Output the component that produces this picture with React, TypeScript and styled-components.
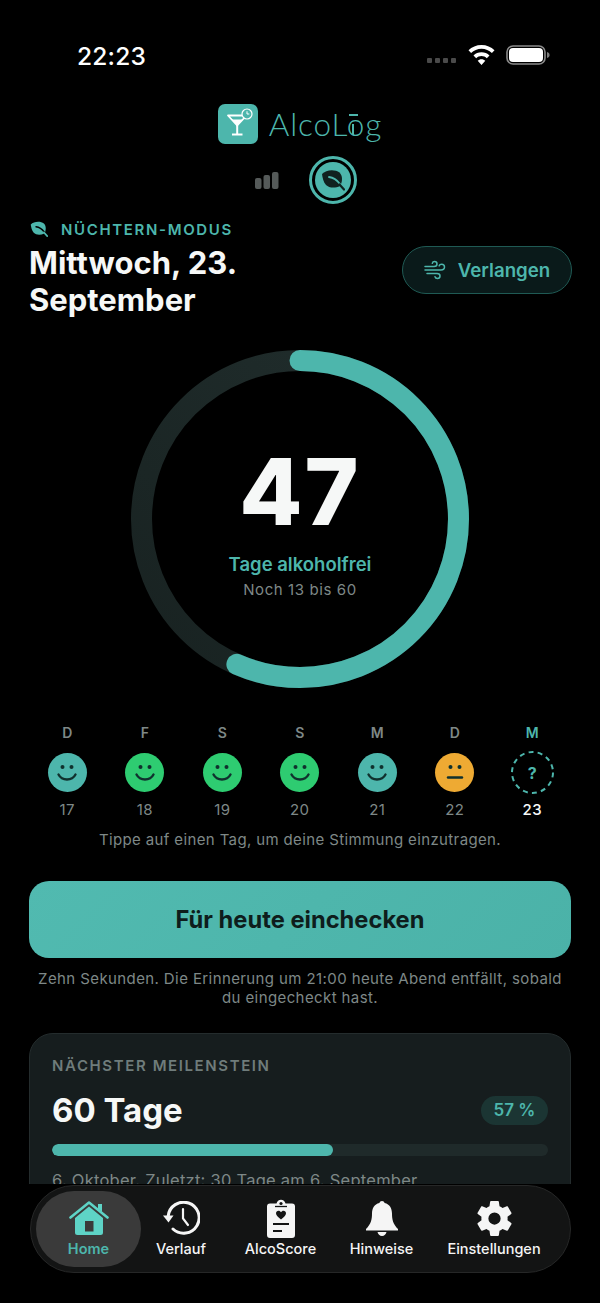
import styled, { createGlobalStyle } from "styled-components";

/* ---------------------------------------------
   Data
--------------------------------------------- */
type Mood = "calm" | "good" | "meh" | "open";

const DAYS: { letter: string; num: number; mood: Mood }[] = [
  { letter: "D", num: 17, mood: "calm" },
  { letter: "F", num: 18, mood: "good" },
  { letter: "S", num: 19, mood: "good" },
  { letter: "S", num: 20, mood: "good" },
  { letter: "M", num: 21, mood: "calm" },
  { letter: "D", num: 22, mood: "meh" },
  { letter: "M", num: 23, mood: "open" },
];

const MOOD_BG: Record<Mood, string> = {
  calm: "#4db6ac",
  good: "#2ecc71",
  meh: "#eeaa33",
  open: "transparent",
};

const TEAL = "#4db6ac";

/* ---------------------------------------------
   Styled Components
--------------------------------------------- */
const Global = createGlobalStyle`
  html, body {
    margin: 0;
    padding: 0;
    background: #000;
  }
  * {
    box-sizing: border-box;
  }
`;

const Screen = styled.div`
  width: 600px;
  height: 1303px;
  background: #000;
  color: #fff;
  font-family: Inter, "Liberation Sans", sans-serif;
  display: flex;
  flex-direction: column;
  overflow: hidden;
`;

const Main = styled.main`
  height: 1184px;
  flex: none;
  overflow: hidden;
`;

const StatusBar = styled.div`
  height: 104px;
  padding: 41px 50px 0 77px;
  display: flex;
  justify-content: space-between;
  align-items: flex-start;
`;

const Clock = styled.div`
  font-size: 24.5px;
  line-height: 30px;
  font-weight: 500;
  letter-spacing: 0.2px;
`;

const StatusIcons = styled.div`
  display: flex;
  align-items: center;
  height: 28px;
`;

const SignalDots = styled.div`
  display: flex;
  gap: 3px;
  margin: 11px 12px 0 0;
`;

const SignalDot = styled.span`
  width: 5px;
  height: 5px;
  border-radius: 1px;
  background: #4a4a4a;
`;

const BrandRow = styled.div`
  height: 40px;
  display: flex;
  justify-content: center;
  align-items: center;
  gap: 11px;
`;

const BrandName = styled.div`
  font-family: Lato, sans-serif;
  font-size: 31.5px;
  line-height: 40px;
  font-weight: 300;
  letter-spacing: 0.9px;
  color: ${TEAL};
  position: relative;

  &::before {
    content: "";
    position: absolute;
    left: 80px;
    top: 10px;
    width: 9px;
    height: 2px;
    background: ${TEAL};
  }

  &::after {
    content: "";
    position: absolute;
    left: 83.500px;
    top: 20px;
    width: 2px;
    height: 11px;
    background: ${TEAL};
  }
`;

const ModeRow = styled.div`
  height: 48px;
  margin-top: 12px;
  padding-left: 255px;
  display: flex;
  align-items: center;
  gap: 30px;
`;

const ModeRing = styled.div`
  width: 48px;
  height: 48px;
  border-radius: 50%;
  border: 3px solid ${TEAL};
  padding: 3px;
`;

const ModeDisc = styled.div`
  width: 100%;
  height: 100%;
  border-radius: 50%;
  background: ${TEAL};
  display: flex;
  align-items: center;
  justify-content: center;
`;

const Header = styled.header`
  padding: 15px 28px 0 30px;
  display: flex;
  justify-content: space-between;
  align-items: flex-start;
`;

const Eyebrow = styled.div`
  display: flex;
  align-items: center;
  gap: 13px;
  height: 20px;
  font-size: 15px;
  font-weight: 600;
  letter-spacing: 1.650px;
  color: ${TEAL};
`;

const Title = styled.h1`
  margin: 5px 0 0 -1px;
  width: 260px;
  font-size: 31px;
  line-height: 37px;
  font-weight: 700;
  color: #f6f8f7;
`;

const CravingButton = styled.button`
  margin-top: 27px;
  width: 170px;
  height: 48px;
  border-radius: 24px;
  border: 1px solid #1f5a54;
  background: #0a1a1a;
  color: ${TEAL};
  font-family: inherit;
  font-size: 18.700px;
  font-weight: 600;
  display: flex;
  align-items: center;
  justify-content: center;
  gap: 12px;
`;

const RingWrap = styled.div`
  position: relative;
  width: 338px;
  height: 338px;
  margin: 32px auto 0;
`;

const RingCenter = styled.div`
  position: absolute;
  inset: 0;
  display: flex;
  flex-direction: column;
  align-items: center;
  padding-top: 84px;
`;

const BigNumber = styled.div`
  font-size: 92px;
  line-height: 116px;
  font-weight: 800;
  letter-spacing: 2px;
  color: #f6f8f7;
`;

const RingLabel = styled.div`
  margin-top: 2px;
  font-size: 18.500px;
  line-height: 24px;
  font-weight: 600;
  color: ${TEAL};
`;

const RingSub = styled.div`
  margin-top: 4px;
  font-size: 15px;
  line-height: 20px;
  letter-spacing: 0.6px;
  color: #7e8887;
`;

const Week = styled.div`
  margin-top: 36px;
  padding: 0 29px 0 28.500px;
  display: grid;
  grid-template-columns: repeat(7, 1fr);
`;

const DayCol = styled.div`
  display: flex;
  flex-direction: column;
  align-items: center;
`;

const DayLetter = styled.div<{ $today?: boolean }>`
  font-size: 14px;
  line-height: 18px;
  font-weight: 600;
  color: ${(p) => (p.$today ? TEAL : "#7e8887")};
`;

const MoodDot = styled.div<{ $mood: Mood }>`
  position: relative;
  width: ${(p) => (p.$mood === "open" ? "43px" : "39px")};
  height: ${(p) => (p.$mood === "open" ? "43px" : "39px")};
  margin: ${(p) => (p.$mood === "open" ? "9px 0 6px" : "11px 0 8px")};
  border-radius: 50%;
  background: ${(p) => MOOD_BG[p.$mood]};
  display: flex;
  align-items: center;
  justify-content: center;
  font-size: 16px;
  font-weight: 700;
  color: ${TEAL};
`;

const DayNum = styled.div<{ $today?: boolean }>`
  font-size: 15px;
  line-height: 20px;
  letter-spacing: 0.4px;
  font-weight: ${(p) => (p.$today ? 500 : 400)};
  color: ${(p) => (p.$today ? "#f6f8f7" : "#7e8887")};
`;

const Hint = styled.p`
  margin: 10px 0 0;
  text-align: center;
  font-size: 15px;
  line-height: 20px;
  letter-spacing: 0.370px;
  color: #7e8887;
`;

const CheckIn = styled.button`
  display: block;
  width: 542px;
  height: 77px;
  margin: 31px 0 0 29px;
  border: none;
  border-radius: 20px;
  background: linear-gradient(135deg, #51bab0, #4bb2a8);
  color: #0e1d1c;
  font-family: inherit;
  font-size: 23.700px;
  font-weight: 700;
`;

const Caption = styled.p`
  margin: 11px 30px 0;
  text-align: center;
  font-size: 15px;
  line-height: 19px;
  letter-spacing: 0.4px;
  color: #7e8887;
`;

const Card = styled.section`
  width: 542px;
  height: 220px;
  margin: 26px 0 0 29px;
  padding: 22px 22px 0 22px;
  border-radius: 24px;
  border: 1px solid #242c2d;
  background: #161d1e;
`;

const CardLabel = styled.div`
  font-size: 15px;
  line-height: 20px;
  font-weight: 600;
  letter-spacing: 1.600px;
  color: #6f7c7b;
`;

const CardRow = styled.div`
  margin-top: 14px;
  height: 40px;
  display: flex;
  justify-content: space-between;
  align-items: center;
`;

const CardTitle = styled.div`
  font-size: 33px;
  line-height: 40px;
  font-weight: 700;
  color: #f6f8f7;
`;

const Pill = styled.div`
  width: 67px;
  height: 29px;
  border-radius: 15px;
  background: #1b3533;
  color: ${TEAL};
  font-size: 17px;
  font-weight: 600;
  display: flex;
  align-items: center;
  justify-content: center;
`;

const Track = styled.div`
  margin-top: 14px;
  height: 12px;
  border-radius: 6px;
  background: #1f2a2a;
  overflow: hidden;
`;

const TrackFill = styled.div`
  height: 100%;
  border-radius: 6px;
  background: ${TEAL};
`;

const CardNote = styled.div`
  margin-top: 14px;
  font-size: 16.500px;
  line-height: 20px;
  letter-spacing: 0.25px;
  color: #7e8887;
`;

const TabBar = styled.nav`
  width: 541px;
  height: 88px;
  margin: 1px 0 0 30px;
  padding: 5px 5px;
  border-radius: 44px;
  border: 1px solid #262727;
  background: #131414;
  display: flex;
  align-items: stretch;
`;

const Tab = styled.div<{ $active?: boolean; $w: number }>`
  flex: none;
  width: ${(p) => p.$w}px;
  border-radius: 38px;
  background: ${(p) => (p.$active ? "#3a3a3a" : "transparent")};
  display: flex;
  flex-direction: column;
  align-items: center;
  justify-content: flex-end;
  padding-bottom: 9px;
`;

const TabIcon = styled.div`
  height: 38px;
  display: flex;
  align-items: center;
  justify-content: center;
`;

const TabLabel = styled.div<{ $active?: boolean }>`
  margin-top: 3px;
  font-size: 14.500px;
  line-height: 18px;
  font-weight: ${(p) => (p.$active ? 600 : 500)};
  color: ${(p) => (p.$active ? TEAL : "#f5f5f5")};
`;

/* ---------------------------------------------
   Drawings
--------------------------------------------- */
const Leaf = ({ size, color, vein }: { size: number; color: string; vein: string }) => (
  <svg width={size} height={size} viewBox="0 0 24 24" fill="none">
    <path
      d="M1 6C5 1.500 14 1 18.500 4.500 22 8 21.500 14 19 18 14 20.500 8 20 5 17 2.500 14.500 1.500 10 1 6Z"
      fill={color}
    />
    <path d="M8 9c4 .5 8 3 11 7" stroke={vein} strokeWidth="1.800" strokeLinecap="round" />
    <path d="M18.500 16.500 23 21.500" stroke={color} strokeWidth="2.200" strokeLinecap="round" />
  </svg>
);

const Wifi = () => (
  <svg width="27" height="21" viewBox="0 0 27 21" fill="#fff">
    <path d="M13.500 0C8.400 0 3.800 2 .5 5.300l2.600 2.800C5.800 5.400 9.500 3.800 13.500 3.800s7.700 1.600 10.400 4.300l2.600-2.800C23.200 2 18.600 0 13.500 0Z" />
    <path d="M13.500 7.200c-3.100 0-5.900 1.200-8 3.200l2.700 2.800c1.400-1.300 3.300-2.200 5.300-2.200s3.900.9 5.300 2.200l2.700-2.800c-2.100-2-4.900-3.200-8-3.200Z" />
    <path d="M13.500 14.300c-1.500 0-2.800.6-3.800 1.500l3.800 4.200 3.800-4.200c-1-.9-2.300-1.500-3.800-1.500Z" />
  </svg>
);

const Battery = () => (
  <svg width="44" height="20" viewBox="0 0 44 20" fill="none" style={{ marginLeft: 11 }}>
    <rect x="1" y="1" width="38" height="18" rx="6" stroke="#8a8a8a" strokeWidth="1.600" />
    <rect x="3" y="3" width="34" height="14" rx="4" fill="#fff" />
    <path d="M41 7c1.600.4 2.600 1.500 2.600 3s-1 2.600-2.600 3V7Z" fill="#7a7a7a" />
  </svg>
);

const LogoMark = () => (
  <svg width="40" height="40" viewBox="0 0 40 40">
    <rect width="40" height="40" rx="7" fill="#4db6ac" />
    <path d="M10 11.500h18.500L19.200 21.500Z" fill="none" stroke="#fff" strokeWidth="1.800" strokeLinejoin="round" />
    <path d="M13.500 15.500h11.500L19.200 21.500Z" fill="#fff" />
    <path d="M18.200 21h2v9h-2Z" fill="#fff" />
    <path d="M14 29.500h10.500v2H14Z" fill="#fff" />
    <circle cx="29" cy="10" r="5" fill="#4db6ac" stroke="#fff" strokeWidth="1.200" />
    <path d="M29 7.300V10h2.300" stroke="#fff" strokeWidth="1" fill="none" />
  </svg>
);

const Bars = () => (
  <svg width="24" height="17" viewBox="0 0 24 17" fill="#555a59">
    <rect x="0" y="6" width="6.500" height="11" rx="2" />
    <rect x="8.500" y="3" width="6.500" height="14" rx="2" />
    <rect x="17" y="0" width="6.500" height="17" rx="2" />
  </svg>
);

const Wind = () => (
  <svg width="22" height="20" viewBox="0 0 22 20" fill="none" stroke={TEAL} strokeWidth="1.500" strokeLinecap="round">
    <path d="M1 6.500h9c2 0 3-1.100 3-2.500S12 1.500 10.600 1.500 8.500 2.300 8.300 3.300" />
    <path d="M1 10h16c2 0 3.500-1.200 3.500-2.900S19.200 4.200 17.600 4.200c-1.300 0-2.200.7-2.500 1.700" />
    <path d="M3 13.500h10c1.900 0 3 1 3 2.400s-1.100 2.500-2.600 2.500c-1.200 0-2.100-.7-2.400-1.700" />
  </svg>
);

const Ring = () => {
  const r = 158.5;
  const c = 2 * Math.PI * r;
  return (
    <svg width="338" height="338" viewBox="0 0 338 338">
      <defs>
        <linearGradient id="track" x1="0" y1="1" x2="1" y2="0">
          <stop offset="0" stopColor="#182221" />
          <stop offset="1" stopColor="#212e2d" />
        </linearGradient>
      </defs>
      <circle cx="169" cy="169" r={r} fill="none" stroke="url(#track)" strokeWidth="21" />
      <circle
        cx="169"
        cy="169"
        r={r}
        fill="none"
        stroke="#4db6ac"
        strokeWidth="21"
        strokeLinecap="round"
        strokeDasharray={`${c * 0.565} ${c}`}
        transform="rotate(-90 169 169)"
      />
    </svg>
  );
};

const Face = ({ mood }: { mood: Mood }) => (
  <svg width="24" height="20" viewBox="0 0 24 20" fill="none" stroke="#10312e" strokeLinecap="round">
    <circle cx="7.500" cy="4" r="2" fill="#10312e" stroke="none" />
    <circle cx="16.500" cy="4" r="2" fill="#10312e" stroke="none" />
    {mood === "meh" ? (
      <path d="M5 14.500h14" strokeWidth="2.400" />
    ) : (
      <path d="M3.500 11.500c1.800 3.400 4.800 5 8.500 5s6.700-1.600 8.500-5" strokeWidth="2.400" />
    )}
  </svg>
);

const DashedRing = () => (
  <svg width="43" height="43" viewBox="0 0 43 43" fill="none" style={{ position: "absolute", inset: 0 }}>
    <circle cx="21.500" cy="21.500" r="20.500" stroke={TEAL} strokeWidth="2" strokeDasharray="5 4.200" />
  </svg>
);

const HomeIcon = () => (
  <svg width="40" height="34" viewBox="0 0 40 34">
    <path
      d="M1.500 16.500 20 1.500l18.500 15"
      fill="none"
      stroke="#5ed3c6"
      strokeWidth="2.600"
      strokeLinecap="round"
      strokeLinejoin="round"
    />
    <path d="M29 3h4v8l-4-3.300V3Z" fill="#5ed3c6" />
    <path
      d="M6 17 20 5.500 34 17v14.500a2.500 2.500 0 0 1-2.500 2.500h-23A2.500 2.500 0 0 1 6 31.500V17Zm10 3v10.500h8.500V20H16Z"
      fill="#5ed3c6"
      fillRule="evenodd"
    />
  </svg>
);

const HistoryIcon = () => (
  <svg width="37" height="34" viewBox="0 0 37 34" fill="none" stroke="#f5f5f5" strokeWidth="3" strokeLinecap="round">
    <path d="M5.200 15A15.500 15.500 0 1 1 10 28" />
    <path d="M20 8v9.500l5 6.500" strokeWidth="2.200" />
    <path d="M0 14.500h10.500L5.500 21.500Z" fill="#f5f5f5" stroke="none" />
  </svg>
);

const ScoreIcon = () => (
  <svg width="28" height="39" viewBox="0 0 28 39">
    <path
      d="M3 4.500h6.500C10 2.200 11.800.8 14 .8s4 1.400 4.500 3.700H25a3 3 0 0 1 3 3V36a3 3 0 0 1-3 3H3a3 3 0 0 1-3-3V7.500a3 3 0 0 1 3-3Z"
      fill="#f5f5f5"
    />
    <circle cx="14" cy="4.500" r="1.600" fill="#131414" />
    <path d="M8 7.500h12" stroke="#131414" strokeWidth="1.300" />
    <path
      d="M14 20.500c-3-2.200-5-4-5-6.200 0-1.500 1.100-2.600 2.500-2.600 1.100 0 2 .6 2.500 1.500.5-.9 1.400-1.500 2.500-1.500 1.400 0 2.500 1.100 2.500 2.600 0 2.200-2 4-5 6.200Z"
      fill="#131414"
    />
    <path d="M6 25h16M6 32h9" stroke="#131414" strokeWidth="1.800" />
  </svg>
);

const BellIcon = () => (
  <svg width="32" height="35" viewBox="0 0 32 35" fill="#f5f5f5">
    <path d="M16 0c1.300 0 2.300.8 2.600 2C23.800 3.300 26 7.500 26 12.500c0 6 1 10.500 6 15.500v1.500H0V28c5-5 6-9.500 6-15.500C6 7.500 8.200 3.300 13.400 2 13.700.8 14.700 0 16 0Z" />
    <path d="M11.500 31h9c-.4 2.300-2.200 4-4.500 4s-4.100-1.700-4.500-4Z" />
  </svg>
);

const GearIcon = () => (
  <svg width="35" height="35" viewBox="2 2 20 20" fill="#f5f5f5">
    <path d="M19.430 12.980c.04-.320.070-.640.070-.980s-.030-.660-.070-.980l2.110-1.650c.190-.150.240-.420.120-.640l-2-3.460c-.120-.220-.390-.300-.610-.220l-2.490 1c-.520-.400-1.080-.730-1.690-.980l-.380-2.650A.49.49 0 0 0 14 2h-4c-.250 0-.460.180-.490.420l-.380 2.650c-.610.250-1.170.590-1.690.980l-2.490-1c-.230-.090-.490 0-.610.220l-2 3.460c-.130.220-.070.490.120.640l2.110 1.650c-.040.320-.070.650-.070.980s.030.660.070.980l-2.110 1.650c-.190.150-.240.420-.120.640l2 3.460c.120.220.390.300.610.220l2.490-1c.520.400 1.080.730 1.690.980l.380 2.650c.030.240.240.420.490.420h4c.250 0 .460-.180.490-.420l.380-2.650c.610-.250 1.170-.590 1.690-.980l2.490 1c.230.090.490 0 .610-.220l2-3.460c.120-.220.070-.490-.120-.640l-2.110-1.650ZM12 15.500a3.500 3.500 0 1 1 0-7 3.500 3.500 0 0 1 0 7Z" />
  </svg>
);

/* ---------------------------------------------
   Component
--------------------------------------------- */
export default function App() {
  return (
    <Screen>
      <Global />
      <Main>
        <StatusBar>
          <Clock>22:23</Clock>
          <StatusIcons>
            <SignalDots>
              <SignalDot />
              <SignalDot />
              <SignalDot />
              <SignalDot />
            </SignalDots>
            <Wifi />
            <Battery />
          </StatusIcons>
        </StatusBar>

        <BrandRow>
          <LogoMark />
          <BrandName>AlcoLog</BrandName>
        </BrandRow>

        <ModeRow>
          <Bars />
          <ModeRing>
            <ModeDisc>
              <Leaf size={24} color="#10211f" vein={TEAL} />
            </ModeDisc>
          </ModeRing>
        </ModeRow>

        <Header>
          <div>
            <Eyebrow>
              <Leaf size={18} color={TEAL} vein="#000" />
              NÜCHTERN-MODUS
            </Eyebrow>
            <Title>Mittwoch, 23. September</Title>
          </div>
          <CravingButton>
            <Wind />
            Verlangen
          </CravingButton>
        </Header>

        <RingWrap>
          <Ring />
          <RingCenter>
            <BigNumber>47</BigNumber>
            <RingLabel>Tage alkoholfrei</RingLabel>
            <RingSub>Noch 13 bis 60</RingSub>
          </RingCenter>
        </RingWrap>

        <Week>
          {DAYS.map((d) => (
            <DayCol key={d.num}>
              <DayLetter $today={d.mood === "open"}>{d.letter}</DayLetter>
              <MoodDot $mood={d.mood}>
                {d.mood === "open" ? (
                  <>
                    <DashedRing />?
                  </>
                ) : (
                  <Face mood={d.mood} />
                )}
              </MoodDot>
              <DayNum $today={d.mood === "open"}>{d.num}</DayNum>
            </DayCol>
          ))}
        </Week>
        <Hint>Tippe auf einen Tag, um deine Stimmung einzutragen.</Hint>

        <CheckIn>Für heute einchecken</CheckIn>
        <Caption>
          Zehn Sekunden. Die Erinnerung um 21:00 heute Abend entfällt, sobald du eingecheckt hast.
        </Caption>

        <Card>
          <CardLabel>NÄCHSTER MEILENSTEIN</CardLabel>
          <CardRow>
            <CardTitle>60 Tage</CardTitle>
            <Pill>57 %</Pill>
          </CardRow>
          <Track>
            <TrackFill style={{ width: "56.700%" }} />
          </Track>
          <CardNote>6. Oktober. Zuletzt: 30 Tage am 6. September</CardNote>
        </Card>
      </Main>

      <TabBar>
        <Tab $active $w={105}>
          <TabIcon>
            <HomeIcon />
          </TabIcon>
          <TabLabel $active>Home</TabLabel>
        </Tab>
        <Tab $w={80}>
          <TabIcon>
            <HistoryIcon />
          </TabIcon>
          <TabLabel>Verlauf</TabLabel>
        </Tab>
        <Tab $w={119}>
          <TabIcon>
            <ScoreIcon />
          </TabIcon>
          <TabLabel>AlcoScore</TabLabel>
        </Tab>
        <Tab $w={83}>
          <TabIcon>
            <BellIcon />
          </TabIcon>
          <TabLabel>Hinweise</TabLabel>
        </Tab>
        <Tab $w={142}>
          <TabIcon>
            <GearIcon />
          </TabIcon>
          <TabLabel>Einstellungen</TabLabel>
        </Tab>
      </TabBar>
    </Screen>
  );
}
